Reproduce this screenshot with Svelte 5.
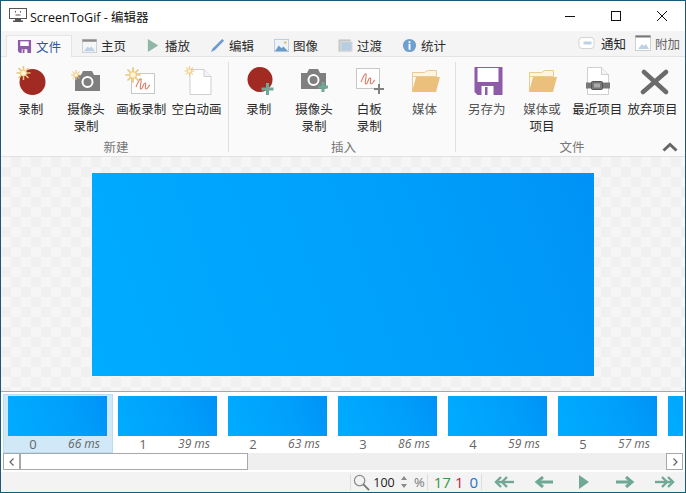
<script>
  const frames = [
    { i: 0, ms: 66 }, { i: 1, ms: 39 }, { i: 2, ms: 63 }, { i: 3, ms: 86 },
    { i: 4, ms: 59 }, { i: 5, ms: 57 }, { i: 6, ms: 40 }
  ];
</script>

{#snippet sun(x, y, s)}
  <g transform="translate({x} {y}) scale({s})" stroke="#ecc47c" stroke-width="1.5">
    <path d="M0-7V7M-7 0H7M-5-5 5 5M-5 5 5-5"/>
    <circle r="3" fill="#fff3d8" stroke="#f0c878" stroke-width="1"/>
  </g>
{/snippet}
{#snippet plus(x, y, c, n = 6, w = 3)}
  <path d="M{x - n} {y}h{n * 2}M{x} {y - n}v{n * 2}" stroke={c} stroke-width={w} fill="none"/>
{/snippet}
{#snippet camera(x, y)}
  <g transform="translate({x} {y})">
    <path d="M0 4h6l2-4h9l2 4h6v16H0z" fill="#7f7f7f"/>
    <circle cx="12.500" cy="11" r="5" fill="none" stroke="#fff" stroke-width="2"/>
  </g>
{/snippet}
{#snippet board(x, y)}
  <g transform="translate({x} {y})">
    <rect x=".5" y=".5" width="23" height="20" fill="#fff" stroke="#c8c8c8"/>
    <path d="M5 14c2-5 4-9 5-8s-2 10 0 10 2-6 4-6-1 6 1 6 2-3 4-4" fill="none" stroke="#e07a66" stroke-width="1.100"/>
  </g>
{/snippet}
{#snippet page(x, y, h)}
  <path d="M{x + .5} {y + .5}h14l7 7v{h}h-21z" fill="#fff" stroke="#cfcfcf"/>
  <path d="M{x + 14.5} {y + .5}v7h7" fill="#f4f4f4" stroke="#cfcfcf"/>
{/snippet}
{#snippet folder()}
  <svg class="ic" viewBox="0 0 32 32">
    <path d="M3.500 9.500h12l3-2h9v6h-24z" fill="#fdf4e2" stroke="#eccb91"/>
    <path d="M3.500 28V9.500" stroke="#eccb91" fill="none"/>
    <path d="M7 14h24l-4 15H3z" fill="#ebc07c"/>
  </svg>
{/snippet}

{#snippet tabIcon(k)}
  {#if k === 'save'}
    <svg class="ti" viewBox="0 0 16 16"><path d="M1 1h14v14H3l-2-2z" fill="#8d5ba8"/><path d="M3.500 2.500h9v5h-9z" fill="#fff"/><path d="M5 11h6v4H5z" fill="#fff"/><path d="M6 11h2v4H6z" fill="#8d5ba8"/></svg>
  {:else if k === 'home'}
    <svg class="ti" viewBox="0 0 16 16"><rect x=".5" y="1.500" width="15" height="14" fill="#f4f6f8" stroke="#cfcfcf"/><path d="M.5 1.500h15v2.500H.5z" fill="#8b8b8b"/><path d="M2 14l4-5 2 2 2-2 4 5z" fill="#bcd2e6"/></svg>
  {:else if k === 'play'}
    <svg class="ti" viewBox="0 0 16 16"><path d="M2 1l11 7-11 7z" fill="#8fb6a6"/></svg>
  {:else if k === 'edit'}
    <svg class="ti" viewBox="0 0 16 16"><path d="M13 1l2 2L5 13l-4 2 2-4z" fill="#6d9bcb"/></svg>
  {:else if k === 'image'}
    <svg class="ti" viewBox="0 0 16 16"><rect x=".5" y="1.500" width="15" height="13" fill="#eef3f8" stroke="#b8cbdd"/><path d="M1 14l4-6 3 3 2-2 5 5z" fill="#6a9bc8"/><circle cx="12" cy="5" r="1.500" fill="#e8c27a"/></svg>
  {:else if k === 'trans'}
    <svg class="ti" viewBox="0 0 16 16"><rect x=".5" y="1.500" width="13" height="13" fill="#c6c6c6"/><rect x="3" y="4" width="12" height="10" fill="#b8cee0" stroke="#dcdcdc"/></svg>
  {:else if k === 'info'}
    <svg class="ti" viewBox="0 0 16 16"><circle cx="8" cy="8" r="7" fill="#6f9fcf"/><path d="M7 3.500h2v2H7zM7 6.500h2v6H7z" fill="#fff"/></svg>
  {/if}
{/snippet}

<div class="win">
  <header class="title">
    <svg class="logo" viewBox="0 0 18 16">
      <rect x=".5" y=".5" width="17" height="10" fill="#fff" stroke="#555"/>
      <path d="M6 11h6v1.500H6zM4 12.500h10V14H4z" fill="#555"/>
      <path d="M6.500 3v1.500M11.500 3v1.500M6.500 7h5" stroke="#555" fill="none"/>
    </svg>
    <span class="apptitle">ScreenToGif - 编辑器</span>
    <div class="winbtns">
      <svg viewBox="0 0 10 10"><path d="M0 5.500h10" stroke="#111"/></svg>
      <svg viewBox="0 0 10 10"><rect x=".5" y=".5" width="9" height="9" fill="none" stroke="#111"/></svg>
      <svg viewBox="0 0 10 10"><path d="M0 0l10 10M10 0L0 10" stroke="#111"/></svg>
    </div>
  </header>

  <nav class="tabs">
    <div class="tab on">{@render tabIcon('save')}<span>文件</span></div>
    <div class="tab">{@render tabIcon('home')}<span>主页</span></div>
    <div class="tab">{@render tabIcon('play')}<span>播放</span></div>
    <div class="tab">{@render tabIcon('edit')}<span>编辑</span></div>
    <div class="tab">{@render tabIcon('image')}<span>图像</span></div>
    <div class="tab">{@render tabIcon('trans')}<span>过渡</span></div>
    <div class="tab">{@render tabIcon('info')}<span>统计</span></div>
    <div class="extras">
      <svg class="ex" viewBox="0 0 16 14"><rect x=".5" y="1.500" width="15" height="11" rx="3" fill="#fff" stroke="#d4d4d4"/><path d="M5 7h8" stroke="#bcd2e6" stroke-width="3"/></svg>
      <span class="extxt dark">通知</span>
      <svg class="ex ex2" viewBox="0 0 16 16"><rect x=".5" y=".5" width="15" height="15" fill="#fff" stroke="#cfcfcf"/><path d="M.5.500h15v2H.5z" fill="#777"/><path d="M3 14l4-5 2 2 2-2 3 5z" fill="#bcd2e6"/></svg>
      <span class="extxt">附加</span>
    </div>
  </nav>

  <section class="ribbon">
    <div class="group g1">
      <div class="btns">
        <div class="btn">
          <svg class="ic" viewBox="0 0 32 32"><circle cx="17.500" cy="19" r="13" fill="#a12a22"/>{@render sun(8.5, 10, 1)}</svg>
          <span>录制</span>
        </div>
        <div class="btn">
          <svg class="ic" viewBox="0 0 32 32">{@render camera(5, 8)}{@render sun(6, 12, .7)}</svg>
          <span>摄像头<br>录制</span>
        </div>
        <div class="btn">
          <svg class="ic" viewBox="0 0 32 32">{@render board(6, 10)}{@render sun(8, 12, 1.100)}</svg>
          <span>画板录制</span>
        </div>
        <div class="btn">
          <svg class="ic" viewBox="0 0 32 32">{@render page(8.5, 6, 18)}{@render sun(8.5, 8, .7)}</svg>
          <span>空白动画</span>
        </div>
      </div>
      <div class="glabel">新建</div>
    </div>
    <div class="group g2">
      <div class="btns">
        <div class="btn">
          <svg class="ic" viewBox="0 0 32 32"><circle cx="17" cy="16.500" r="12.500" fill="#a12a22"/>{@render plus(24.5, 26, '#6fa894')}</svg>
          <span>录制</span>
        </div>
        <div class="btn">
          <svg class="ic" viewBox="0 0 32 32">{@render camera(3, 6)}{@render plus(25, 24, '#6fa894', 5)}</svg>
          <span>摄像头<br>录制</span>
        </div>
        <div class="btn">
          <svg class="ic" viewBox="0 0 32 32">{@render board(3, 5)}{@render plus(26, 26, '#7f7f7f', 5, 2)}</svg>
          <span>白板<br>录制</span>
        </div>
        <div class="btn">
          {@render folder()}
          <span class="soft">媒体</span>
        </div>
      </div>
      <div class="glabel">插入</div>
    </div>
    <div class="group g3">
      <div class="btns">
        <div class="btn">
          <svg class="ic" viewBox="0 0 32 32"><path d="M3.500 4h28v28H6.500l-3-3z" fill="#8d5ba8"/><path d="M6.500 5h21v14h-21z" fill="#fff"/><path d="M10.500 23h12v9h-12z" fill="#fff"/><path d="M14 24h2.500v8H14z" fill="#8d5ba8"/></svg>
          <span class="soft">另存为</span>
        </div>
        <div class="btn">
          {@render folder()}
          <span class="soft">媒体或<br><em>项目</em></span>
        </div>
        <div class="btn">
          <svg class="ic" viewBox="0 0 32 32">{@render page(6, 4, 20)}<path d="M5 19.500h24v6H5z" fill="#777"/><rect x="10.500" y="18.500" width="11" height="8" rx="1" fill="#777" stroke="#555"/><rect x="13" y="20.500" width="6" height="4" fill="#aaa"/></svg>
          <span>最近项目</span>
        </div>
        <div class="btn">
          <svg class="ic" viewBox="0 0 32 32"><path d="M7 9l22 20M29 9L6 29" stroke="#6b6b6b" stroke-width="4.500" stroke-linecap="round" fill="none"/></svg>
          <span>放弃项目</span>
        </div>
      </div>
      <div class="glabel">文件</div>
    </div>
    <svg class="collapse" viewBox="0 0 16 10"><path d="M1.500 8.500L8 2.500l6.500 6" fill="none" stroke="#666" stroke-width="3"/></svg>
  </section>

  <main class="stage">
    <div class="canvas"></div>
  </main>

  <section class="strip">
    <div class="frames">
      {#each frames as f}
        <div class="frame" class:sel={f.i === 0}>
          <div class="thumb"></div>
          {#if f.i < 6}
            <div class="meta"><span class="num">{f.i}</span><span class="ms">{f.ms} ms</span></div>
          {/if}
        </div>
      {/each}
    </div>
    <div class="scroll">
      <div class="sbtn"><svg viewBox="0 0 8 10"><path d="M5.500 1.500L2 5l3.500 3.500" fill="none" stroke="#606060" stroke-width="1.200"/></svg></div>
      <div class="sthumb"></div>
      <div class="strack"></div>
      <div class="sbtn right"><svg viewBox="0 0 8 10"><path d="M2.500 1.500L6 5 2.500 8.500" fill="none" stroke="#606060" stroke-width="1.200"/></svg></div>
    </div>
  </section>

  <footer class="status">
    <div class="sep"></div>
    <svg class="zoom" viewBox="0 0 18 18"><circle cx="7" cy="7" r="5.500" fill="none" stroke="#8a8a8a" stroke-width="1.300"/><path d="M11 11l6 6" stroke="#777" stroke-width="2"/></svg>
    <span class="pct">100</span>
    <svg class="spin" viewBox="0 0 8 14"><path d="M4 1l3 4H1zM4 13l3-4H1z" fill="#8a8a8a"/></svg>
    <span class="pcs">%</span>
    <div class="sep"></div>
    <span class="cnt green">17</span><span class="cnt red">1</span><span class="cnt blue">0</span>
    <div class="sep"></div>
    <div class="nav">
      <svg viewBox="0 0 21 12"><path d="M7 1L2 6l5 5M13 1L8 6l5 5" fill="none" stroke="#6fa894" stroke-width="2.400"/><path d="M4 6h16" stroke="#6fa894" stroke-width="2.400"/></svg>
      <svg viewBox="0 0 21 12"><path d="M9 1L3 6l6 5" fill="none" stroke="#6fa894" stroke-width="3"/><path d="M5 6h14" stroke="#6fa894" stroke-width="3"/></svg>
      <svg viewBox="0 0 21 16" class="tall"><path d="M5 1l10 7-10 7z" fill="#6fa894"/></svg>
      <svg viewBox="0 0 21 12"><path d="M12 1l6 5-6 5" fill="none" stroke="#6fa894" stroke-width="3"/><path d="M2 6h14" stroke="#6fa894" stroke-width="3"/></svg>
      <svg viewBox="0 0 21 12"><path d="M8 1l5 5-5 5M14 1l5 5-5 5" fill="none" stroke="#6fa894" stroke-width="2.400"/><path d="M1 6h16" stroke="#6fa894" stroke-width="2.400"/></svg>
    </div>
  </footer>
</div>

<style>
  :global(body) { margin: 0; }
  .win {
    box-sizing: border-box; width: 686px; height: 493px; overflow: hidden;
    border: 1px solid #1a5a78;
    display: flex; flex-direction: column; background: #fff;
    font: 12.5px "Noto Sans CJK SC", "Liberation Sans", sans-serif; color: #2a2a2a;
  }
  .title { height: 30px; flex: none; display: flex; align-items: center; padding-left: 8px; }
  .logo { width: 18px; height: 16px; margin-right: 3px; }
  .apptitle { font-family: "Open Sans", "Noto Sans CJK SC", sans-serif; font-size: 12.5px; color: #111; }
  .winbtns { margin-left: auto; display: flex; gap: 36px; padding-right: 18px; }
  .winbtns svg { width: 10px; height: 10px; display: block; }

  .tabs { height: 26px; flex: none; background: #f4f4f4; display: flex; padding-left: 5px; border-bottom: 1px solid #e4e4e4; box-sizing: border-box; align-items: flex-end; }
  .tab { width: 64px; height: 21px; display: flex; align-items: center; gap: 4px; padding-left: 8px; box-sizing: border-box; white-space: nowrap; }
  .tab span { line-height: 18px; }
  .tab.on { width: 66px; height: 22px; margin-right: 2px; margin-bottom: -1px; background: #fafafa; border: 1px solid #e4e4e4; border-bottom: 0; padding-left: 10px; color: #2b55a8; }
  .ti { width: 15px; height: 15px; flex: none; }
  .extras { margin-left: auto; align-self: flex-start; display: flex; align-items: center; height: 22px; margin-top: 1px; padding-right: 5px; }
  .ex { width: 17px; height: 14px; margin-right: 6px; }
  .ex2 { width: 16px; height: 16px; margin-left: 9px; margin-right: 4px; }
  .extxt { color: #666; }
  .extxt.dark { color: #222; }

  .ribbon { height: 100px; flex: none; position: relative; display: flex; background: #fafafa; border-bottom: 1px solid #e2e2e2; box-sizing: border-box; }
  .group { display: flex; flex-direction: column; padding-top: 6px; box-sizing: border-box; }
  .g1 { width: 228px; padding-left: 2px; }
  .g2 { width: 227px; padding-left: 2px; }
  .g3 { flex: 1; padding-left: 3px; }
  .g1, .g2 { position: relative; }
  .g1::after, .g2::after { content: ""; position: absolute; right: 0; top: 5px; height: 90px; width: 1px; background: #e0e0e0; }
  .btns { display: flex; height: 76px; }
  .btn { width: 55.300px; display: flex; flex-direction: column; align-items: center; text-align: center; white-space: nowrap; line-height: 17px; }
  .btn span { margin-top: 5px; }
  .btn .soft { color: #555; }
  .btn em { font-style: normal; color: #2a2a2a; }
  .ic { width: 32px; height: 32px; flex: none; display: block; }
  .glabel { text-align: center; color: #777; line-height: 16px; }
  .collapse { position: absolute; right: 7px; bottom: 4px; width: 16px; height: 10px; }

  .stage {
    flex: 1; display: flex; align-items: center; justify-content: center; min-height: 0;
    box-sizing: border-box;
    background: repeating-conic-gradient(#f0f0f0 0 25%, #f6f6f6 0 50%) 0 0 / 20px 20px;
  }
  .canvas { width: 502px; height: 203px; flex: none; background: linear-gradient(70deg, #00acff 0%, #009ffa 65%, #0092f7 100%); }

  .strip { flex: none; height: 79px; border-top: 1px solid #a8a8a8; box-sizing: border-box; background: #fff; padding: 2px 2px 0; overflow: hidden; }
  .frames { display: flex; height: 59px; overflow: hidden; }
  .frame { flex: none; width: 110px; box-sizing: border-box; padding: 2px 5px 0; }
  .frame.sel { background: #d0e8f7; outline: 1px solid #bbddf2; outline-offset: -1px; }
  .thumb { width: 99px; height: 40px; background: linear-gradient(70deg, #00acff 0%, #009ffa 65%, #0092f7 100%); }
  .meta { height: 17px; position: relative; display: flex; color: #666; font-family: "Open Sans", sans-serif; }
  .num { position: absolute; left: 0; width: 50px; text-align: center; font-size: 13px; line-height: 17px; }
  .ms { position: absolute; right: 8px; font-style: italic; font-size: 12px; line-height: 16px; }

  .scroll { display: flex; height: 17px; background: #efefef; }
  .sbtn { width: 17px; height: 17px; box-sizing: border-box; border: 1px solid #a8a8a8; background: #fff; display: flex; align-items: center; justify-content: center; flex: none; }
  .sbtn svg { width: 8px; height: 10px; }
  .sthumb { width: 228px; flex: none; box-sizing: border-box; border: 1px solid #a8a8a8; background: #fff; }
  .strack { flex: 1; }

  .status { flex: none; height: 20px; background: #f3f3f3; margin-top: 2px; display: flex; align-items: center; padding-left: 349px; color: #222; font-family: "Open Sans", sans-serif; }
  .sep { width: 1px; height: 16px; background: #dcdcdc; flex: none; }
  .zoom { width: 17px; height: 17px; margin-left: 2px; }
  .pct { width: 22px; text-align: center; margin-left: 3px; font-size: 12.5px; }
  .spin { width: 8px; height: 14px; margin-left: 5px; }
  .pcs { margin: 0 2px 0 6px; color: #777; font-size: 13px; }
  .cnt { font-size: 15px; margin-left: 4px; line-height: 18px; }
  .cnt.green { color: #2e9e3e; margin-left: 6px; }
  .cnt.red { color: #c8243c; }
  .cnt.blue { color: #2a74c8; margin-left: 6px; margin-right: 3px; }
  .nav { display: flex; align-items: center; gap: 19px; padding-left: 12px; }
  .nav svg { width: 21px; height: 12px; display: block; }
  .nav svg.tall { height: 16px; }
</style>
